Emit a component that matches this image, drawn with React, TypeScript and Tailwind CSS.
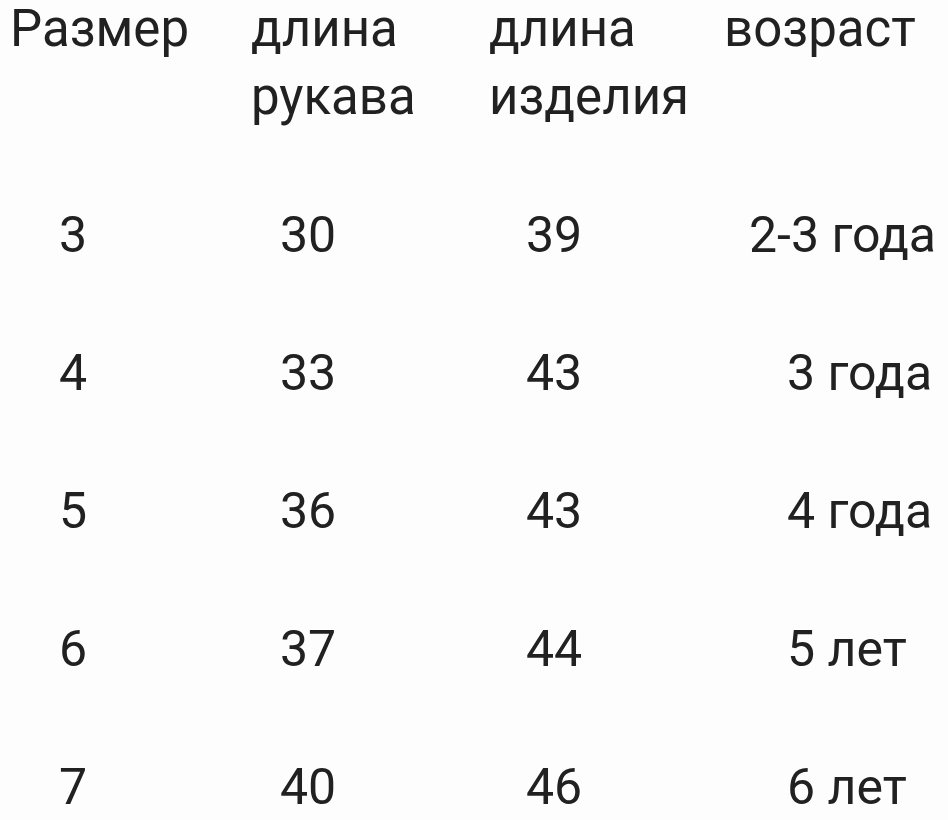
const rows = [
  { size: "3", sleeve: "30", length: "39", age: "2-3 года", agePad: "pl-[25px]" },
  { size: "4", sleeve: "33", length: "43", age: "3 года", agePad: "pl-[63px]" },
  { size: "5", sleeve: "36", length: "43", age: "4 года", agePad: "pl-[63px]" },
  { size: "6", sleeve: "37", length: "44", age: "5 лет", agePad: "pl-[63px]" },
  { size: "7", sleeve: "40", length: "46", age: "6 лет", agePad: "pl-[63px]" },
];

export default function App() {
  return (
    <div
      className="h-[820px] w-[948px] overflow-hidden bg-[#fdfdfd] text-[#212121]"
      style={{ fontFamily: "Roboto, 'Noto Sans', sans-serif" }}
    >
      {/* шапка таблицы */}
      <div className="-mt-[5px] flex text-[51px] leading-[68px]">
        <div className="w-[251px] pl-[10px]">Размер</div>
        <div className="w-[238px]">
          длина
          <br />
          рукава
        </div>
        <div className="w-[235px]">
          длина
          <br />
          изделия
        </div>
        <div className="flex-1">возраст</div>
      </div>

      <div className="mt-[35px] text-[50px]">
        {rows.map((r) => (
          <div key={r.size} className="flex leading-[138px]">
            <div className="w-[251px] pl-[59px]">{r.size}</div>
            <div className="w-[238px] pl-[29px]">{r.sleeve}</div>
            <div className="w-[235px] pl-[37px]">{r.length}</div>
            <div className={`flex-1 whitespace-nowrap ${r.agePad}`}>{r.age}</div>
          </div>
        ))}
      </div>
    </div>
  );
}
